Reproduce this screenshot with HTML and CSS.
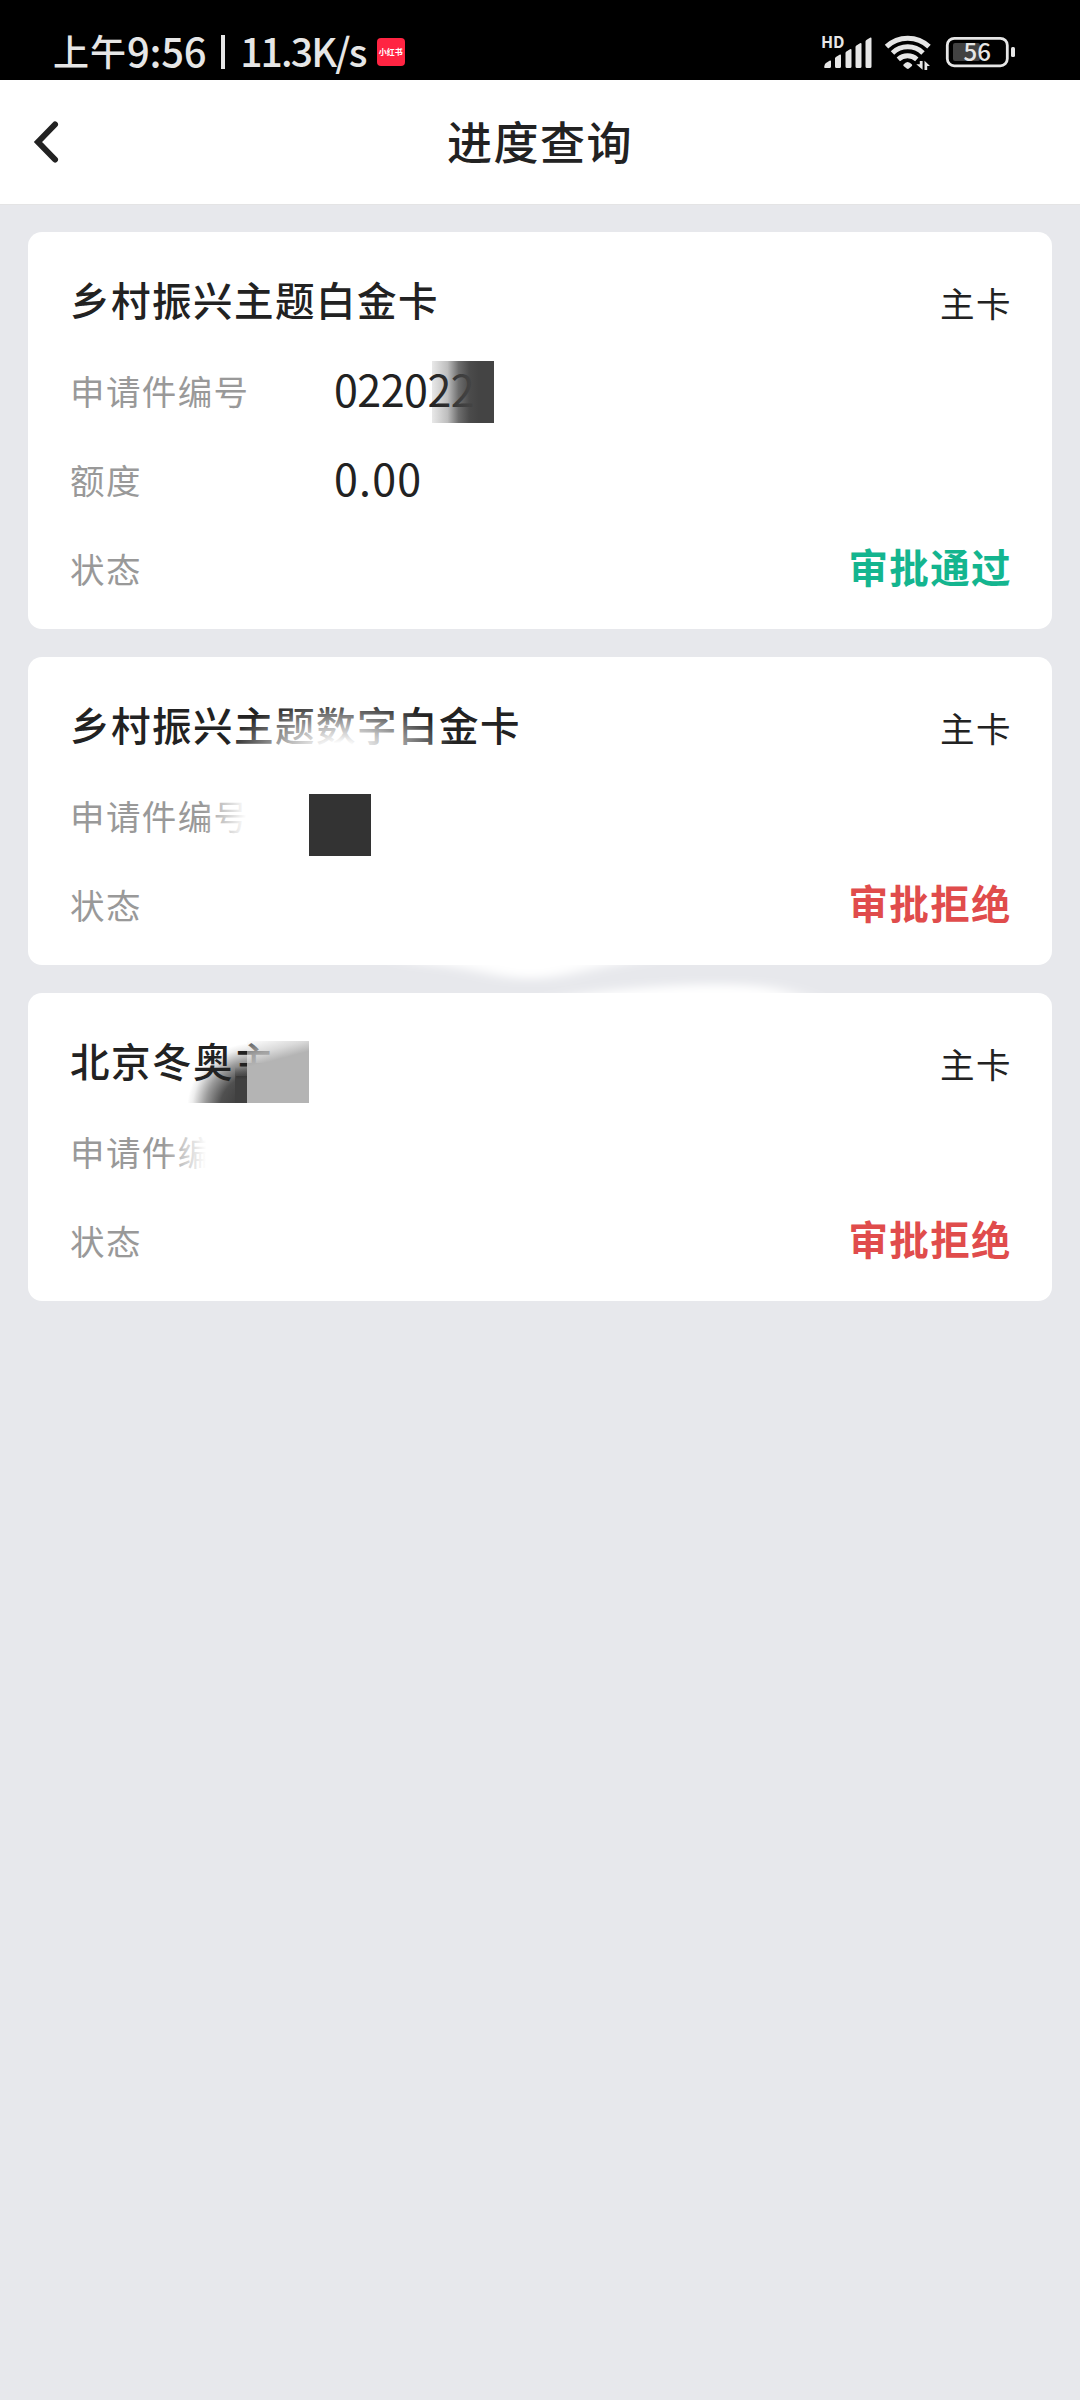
FILE: index.html
```html
<!DOCTYPE html>
<html lang="zh-CN">
<head>
<meta charset="utf-8">
<title>进度查询</title>
<link rel="stylesheet" href="styles.css">
</head>
<body>
<div class="statusbar">
  <div class="status-left">
    <span class="time-cn">上午</span><span class="clock">9:56</span><span class="divider"></span><span class="speed">11.3K/s</span>
    <span class="app-badge">小红书</span>
  </div>
  <svg class="status-icons" width="200" height="48" viewBox="820 24 200 48">
    <g fill="#e6e6e6">
      <text x="821" y="48" class="hd">HD</text>
      <path d="M825 68q-1 0-.8-1.200l.6-2.300q.3-1 1.200-1.500l3.500-2.300q1.500-.8 1.500.7v5q0 1.600-1.500 1.600zM835 58.500q0-1 .9-1.600l3.600-2.200q1.500-.7 1.500.7v11q0 1.600-1.500 1.600h-3q-1.500 0-1.500-1.600zM845.500 53q0-1 .9-1.600l3.600-2.200q1.500-.7 1.500.7v16.500q0 1.600-1.500 1.600h-3q-1.500 0-1.500-1.600zM855.500 47q0-1 .9-1.600l3.600-2.200q1.500-.7 1.500.7v22.500q0 1.600-1.500 1.600h-3q-1.500 0-1.500-1.600zM865.500 41.500q0-1 .9-1.600l3.600-2.200q1.500-.7 1.500.7v28q0 1.600-1.500 1.600h-3q-1.500 0-1.500-1.600z"/>
      <path d="M903.500 64.500q4-5 8.500 0q.5.800-.1 1.400l-3 2.700q-1 .9-2.200 0l-3.100-2.700q-.6-.6-.1-1.400z"/>
      <path d="M919.800 61h2.800v8.800l-6.300-5.600h3.500zM924.500 70v-9.300l5.500 5.300h-2.800v4z"/>
      <rect x="1011" y="47" width="4" height="10" rx="1.500"/>
    </g>
    <g fill="none" stroke="#e6e6e6" stroke-width="5">
      <path d="M886.500 46.600a31 31 0 0 1 42.500 0M892.500 53a22 22 0 0 1 30.500 0M898.300 59.300a14 14 0 0 1 18.500 0"/>
      <rect x="947.300" y="38.300" width="60" height="27.500" rx="7" stroke-width="2.800"/>
    </g>
    <rect x="953" y="43" width="27" height="18" rx="2" fill="#424242"/>
    <text x="963.500" y="61" class="battery">56</text>
  </svg>
</div>
<header class="navbar">
  <svg class="back" width="28" height="44" viewBox="0 0 28 44"><path d="M22 4.500 5 22 22 39.500" fill="none" stroke="#222" stroke-width="6" stroke-linecap="round"/></svg>
  <h1>进度查询</h1>
</header>
<main class="list">
  <section class="card">
    <div class="row head"><h2>乡村振兴主题白金卡</h2><span class="kind">主卡</span></div>
    <div class="row"><span class="label">申请件编号</span><span class="number">022022</span></div>
    <div class="row"><span class="label">额度</span><span class="amount">0.00</span></div>
    <div class="row"><span class="label">状态</span><span class="state approved">审批通过</span></div>
    <i class="mask number-mask"></i>
  </section>
  <section class="card">
    <div class="row head"><h2>乡村振兴主题数字白金卡</h2><span class="kind">主卡</span></div>
    <div class="row"><span class="label">申请件编号</span></div>
    <div class="row"><span class="label">状态</span><span class="state rejected">审批拒绝</span></div>
    <i class="mask title-fade"></i>
    <i class="mask label-fade"></i>
    <i class="mask dark-tile"></i>
  </section>
  <section class="card">
    <i class="mask corner-tile"></i>
    <div class="row head"><h2>北京冬奥主</h2><span class="kind">主卡</span></div>
    <div class="row"><span class="label">申请件编</span></div>
    <div class="row"><span class="label">状态</span><span class="state rejected">审批拒绝</span></div>
    <i class="mask tail-fade"></i>
    <i class="mask grey-tile"></i>
    <i class="mask short-label-fade"></i>
    <svg class="smear" width="560" height="40" viewBox="330 960 560 40">
      <defs><filter id="soft" x="-10%" y="-80%" width="120%" height="260%"><feGaussianBlur stdDeviation="14 5"/></filter></defs>
      <g fill="#fff" filter="url(#soft)">
        <path d="M380 946 L410 962 Q460 966 490 974 Q530 984 570 974 Q610 964 640 960 L680 946z"/>
        <path d="M500 1014 Q570 992 640 988 Q720 981 770 987 Q800 992 825 1010z"/>
      </g>
    </svg>
  </section>
</main>
</body>
</html>
```
FILE: styles.css
```css
* { box-sizing: border-box; }
body {
  margin: 0;
  min-height: 2400px;
  background: #e7e8ec;
  color: #222;
  font-family: "Noto Sans CJK SC", sans-serif;
}
h1, h2 { margin: 0; font-weight: 500; white-space: nowrap; }

.statusbar {
  height: 80px;
  padding: 22px 60px 0 53px;
  display: flex;
  justify-content: space-between;
  background: #000;
  color: #e6e6e6;
}
.status-left {
  height: 56px;
  display: flex;
  align-items: center;
  font-weight: 500;
  line-height: 56px;
}
.time-cn { font-size: 36px; letter-spacing: 1px; }
.clock { font-size: 40px; letter-spacing: -.3px; }
.divider { width: 4px; height: 34px; margin: 4px 15px 0 15px; background: #e6e6e6; }
.speed { font-size: 39px; letter-spacing: -1.800px; }
.app-badge {
  width: 28px;
  height: 28px;
  margin: 3px 0 0 11px;
  border-radius: 4px;
  background: #ff2442;
  color: #fff;
  font-size: 8px;
  font-weight: 700;
  line-height: 28px;
  text-align: center;
}
.status-icons { margin-top: 2px; }
.hd { font: 700 16px "Noto Sans CJK SC", sans-serif; }
.battery { font: 500 24px "Noto Sans CJK SC", sans-serif; fill: #e6e6e6; }

.navbar {
  height: 125px;
  padding-left: 33px;
  display: grid;
  grid-template-columns: 28px 1fr 61px;
  align-items: center;
  background: #fff;
  border-bottom: 1px solid #e4e4e5;
}
.navbar h1 { padding-bottom: 3px; text-align: center; font-size: 45px; letter-spacing: 1.500px; line-height: 60px; }

.list { padding: 27px 28px; display: flex; flex-direction: column; gap: 28px; }
.card {
  position: relative;
  padding: 24px 40px 15px 42px;
  border-radius: 14px;
  background: #fff;
}
.row { position: relative; height: 89px; display: flex; align-items: center; line-height: 60px; }
.head { height: 91px; justify-content: space-between; }
.head h2 { padding-bottom: 6px; font-size: 39.500px; letter-spacing: 1.500px; }
.kind { font-size: 34.500px; letter-spacing: 1.500px; }
.label { width: 264px; padding-bottom: 4px; color: #999; font-size: 34.500px; letter-spacing: 1.400px; }
.number, .amount { padding-bottom: 7px; font-size: 43px; }
.number { letter-spacing: -0.500px; }
.amount { letter-spacing: 1.200px; }
.state { margin-left: auto; padding-bottom: 8px; font-size: 39.500px; font-weight: 700; letter-spacing: 1.400px; }
.approved { color: #14b58f; }
.rejected { color: #e04c4c; }

.mask { position: absolute; display: block; width: 62px; height: 62px; }
.number-mask {
  left: 404px;
  top: 129px;
  background: linear-gradient(90deg, rgba(68,68,68,.12), rgba(68,68,68,.35) 25%, rgba(68,68,68,.78) 43%, rgba(68,68,68,.96) 60%, #444 75%);
}
.title-fade {
  left: 200px;
  top: 36px;
  width: 240px;
  height: 70px;
  background: radial-gradient(ellipse 115px 52px at 112px 58px, #fff 15%, rgba(255,255,255,.7) 45%, rgba(255,255,255,0));
}
.label-fade {
  left: 175px;
  top: 130px;
  background: linear-gradient(90deg, rgba(255,255,255,0), #fff 70%);
}
.dark-tile { left: 281px; top: 137px; background: #333; }
.corner-tile {
  left: 157px;
  top: 48px;
  background: radial-gradient(ellipse 66px 66px at 68px 68px, #404040 25%, #505050 50%, #999 72%, #eee 92%, #fff);
}
.tail-fade {
  left: 207px;
  top: 74px;
  width: 12px;
  height: 36px;
  background: linear-gradient(rgba(64,64,64,0), #404040 35%);
}
.grey-tile {
  left: 219px;
  top: 48px;
  background: linear-gradient(165deg, rgba(255,255,255,.25), rgba(205,205,205,.75) 20%, #b4b4b4 34%);
}
.short-label-fade {
  left: 135px;
  top: 130px;
  background: linear-gradient(90deg, rgba(255,255,255,0), #fff 70%);
}
.smear { position: absolute; left: 302px; top: -33px; }
```
